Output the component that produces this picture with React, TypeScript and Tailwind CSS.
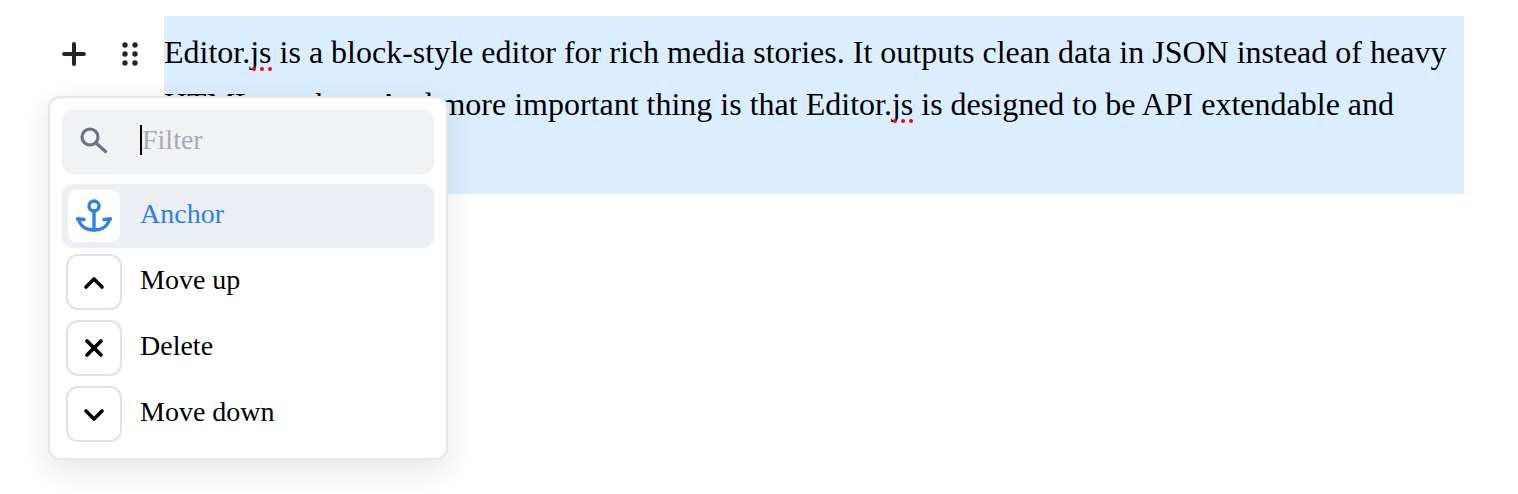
import React from 'react';
import { ChevronUp, ChevronDown, X, Plus } from 'lucide-react';

function Misspelled({ children }: { children: React.ReactNode }) {
  return (
    <span className="relative">
      {children}
      <span className="absolute bottom-[-1px] right-0 flex gap-1">
        <span className="h-1 w-1 rounded-full bg-[#ff0000]" />
        <span className="h-1 w-1 rounded-full bg-[#ff0000]" />
        <span className="h-1 w-1 rounded-full bg-[#ff0000]" />
      </span>
    </span>
  );
}

function GripDots() {
  return (
    <svg width="16" height="24" viewBox="0 0 16 24" fill="#1f2430" className="block">
      <circle cx="3" cy="3" r="2.7" />
      <circle cx="13" cy="3" r="2.7" />
      <circle cx="3" cy="12" r="2.7" />
      <circle cx="13" cy="12" r="2.7" />
      <circle cx="3" cy="21" r="2.7" />
      <circle cx="13" cy="21" r="2.7" />
    </svg>
  );
}

function SearchIcon() {
  return (
    <svg width="28" height="28" viewBox="0 0 28 28" fill="none" stroke="#6b7280" strokeWidth="3.2" strokeLinecap="round" className="block">
      <circle cx="10" cy="10" r="8" />
      <path d="M16 16 L25.5 24.5" />
    </svg>
  );
}

function AnchorIcon() {
  return (
    <svg width="36" height="34" viewBox="0 0 36 34" fill="none" stroke="#2f80e8" strokeWidth="3.4" strokeLinecap="round" strokeLinejoin="round" className="block">
      <circle cx="18" cy="7" r="5" />
      <path d="M18 12 V31" />
      <path d="M2.5 20 C4 27 10 31 18 31 C26 31 32 27 33.5 20" />
      <path d="M1.5 20 L8 20.5 M34.5 20 L28 20.5" />
    </svg>
  );
}

const items = [
  { label: 'Move up', icon: ChevronUp, iconClass: 'h-8 w-8 translate-y-px', stroke: 2.7 },
  { label: 'Delete', icon: X, iconClass: 'h-7 w-7', stroke: 3.2 },
  { label: 'Move down', icon: ChevronDown, iconClass: 'h-8 w-8 translate-y-px', stroke: 2.7 },
];

export default function App() {
  return (
    <div className="relative h-[494px] w-[1518px] overflow-hidden bg-white font-['Liberation_Serif',serif] text-black">
      <div className="flex pl-[56px] pr-[54px] pt-4">
        <div className="flex w-[108px] items-start pt-[26px]">
          <Plus className="ml-[1px] -mt-[5px] h-[34px] w-[34px] text-[#1f2430]" strokeWidth={2.8} />
          <div className="ml-[31px]">
            <GripDots />
          </div>
        </div>
        <div className="h-[178px] w-[1300px] bg-[#daeeff] pb-[11px] pt-[10px] text-[32px] leading-[52px]">
          <Misspelled>Editor.js</Misspelled> is a block-style editor for rich media stories. It outputs clean data in JSON instead of heavy HTML-markup. And more important thing is that <Misspelled>Editor.js</Misspelled> is designed to be API extendable and pluggable.
        </div>
      </div>

      <div className="absolute left-[48px] top-[96px] w-[400px] rounded-xl border-2 border-[#e6e7eb] bg-white px-3 pb-3 pt-3 shadow-[0_10px_30px_rgba(30,40,60,0.12)]">
        <div className="flex h-16 items-center rounded-xl border border-[#ebecef] bg-[#f1f2f4]">
          <div className="ml-[17px] -mt-[3px]">
            <SearchIcon />
          </div>
          <div className="ml-[32px] flex items-center pb-1 text-[28px] leading-8 text-[#a8abb3]">
            <span className="h-[30px] w-[2px] bg-black" />
            Filter
          </div>
        </div>

        <div className="mt-[10px] flex h-16 items-center rounded-xl bg-[#ebeef3]">
          <div className="ml-[6px] flex h-[52px] w-[52px] items-center justify-center rounded-lg bg-white">
            <AnchorIcon />
          </div>
          <span className="ml-5 pb-1 text-[28px] leading-8 text-[#2f80e8]">Anchor</span>
        </div>

        <div className="mt-[2px] flex flex-col gap-[2px]">
          {items.map((item) => (
            <div key={item.label} className="flex h-16 items-center">
              <div className="ml-1 flex h-14 w-14 items-center justify-center rounded-xl border-2 border-[#e2e2e4]">
                <item.icon className={item.iconClass} strokeWidth={item.stroke} />
              </div>
              <span className="ml-[18px] pb-1 text-[28px] leading-8">{item.label}</span>
            </div>
          ))}
        </div>
      </div>
    </div>
  );
}
